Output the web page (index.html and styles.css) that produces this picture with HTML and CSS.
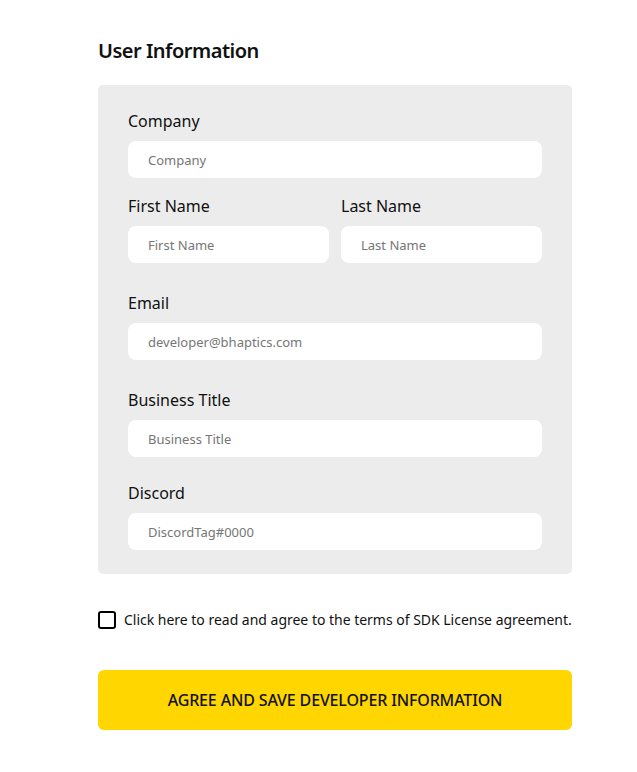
FILE: index.html
```html
<!DOCTYPE html>
<html>
<head>
<meta charset="utf-8">
<link rel="stylesheet" href="styles.css">
</head>
<body>
<main class="page">
  <h2 class="title">User Information</h2>
  <form class="card">
    <div class="field">
      <label class="label">Company</label>
      <input class="input" placeholder="Company">
    </div>
    <div class="row field-names">
      <div class="field">
        <label class="label">First Name</label>
        <input class="input" placeholder="First Name">
      </div>
      <div class="field">
        <label class="label">Last Name</label>
        <input class="input" placeholder="Last Name">
      </div>
    </div>
    <div class="field field-gap">
      <label class="label">Email</label>
      <input class="input" placeholder="developer@bhaptics.com">
    </div>
    <div class="field field-gap">
      <label class="label">Business Title</label>
      <input class="input" placeholder="Business Title">
    </div>
    <div class="field field-discord">
      <label class="label">Discord</label>
      <input class="input" placeholder="DiscordTag#0000">
    </div>
  </form>
  <label class="agree">
    <span class="box"></span>
    <span class="agree-text">Click here to read and agree to the terms of SDK License agreement.</span>
  </label>
  <button class="submit" type="button">AGREE AND SAVE DEVELOPER INFORMATION</button>
</main>
</body>
</html>
```
FILE: styles.css
```css
* { box-sizing: border-box; }
html, body { margin: 0; padding: 0; background: #fff; }
body { font-family: "Noto Sans", "Open Sans", sans-serif; color: #111; }
.page { width: 474px; margin-left: 98px; padding-top: 37px; }
.title { margin: 0; font-size: 20px; line-height: 28px; font-weight: 600; letter-spacing: -0.5px; color: #111; }
.card { margin-top: 20px; background: #ececec; border-radius: 5px; padding: 25px 30px 24px; display: flex; flex-direction: column; }
.field { display: flex; flex-direction: column; }
.label { font-size: 16px; line-height: 22px; margin-bottom: 9px; color: #111; }
.input { height: 37px; border: none; border-radius: 8px; background: #fff; padding: 0 20px; font-family: "Noto Sans", sans-serif; font-size: 13px; color: #111; outline: none; width: 100%; }
.input::placeholder { color: #767676; }
.row { display: grid; grid-template-columns: 1fr 1fr; gap: 12px; }
.field-names { margin-top: 17px; }
.field-gap { margin-top: 29px; }
.field-discord { margin-top: 25px; }
.agree { display: flex; align-items: center; gap: 8px; margin-top: 36px; cursor: pointer; }
.box { width: 18px; height: 18px; border: 2px solid #000; border-radius: 3px; flex: none; }
.agree-text { font-size: 14px; line-height: 20px; color: #111; white-space: nowrap; letter-spacing: -0.015px; }
.submit { display: block; width: 100%; height: 60px; margin-top: 40px; border: none; border-radius: 6px; background: #ffd600; font-family: "Noto Sans", sans-serif; font-size: 16px; font-weight: 500; letter-spacing: -0.15px; color: #111; cursor: pointer; }
```
